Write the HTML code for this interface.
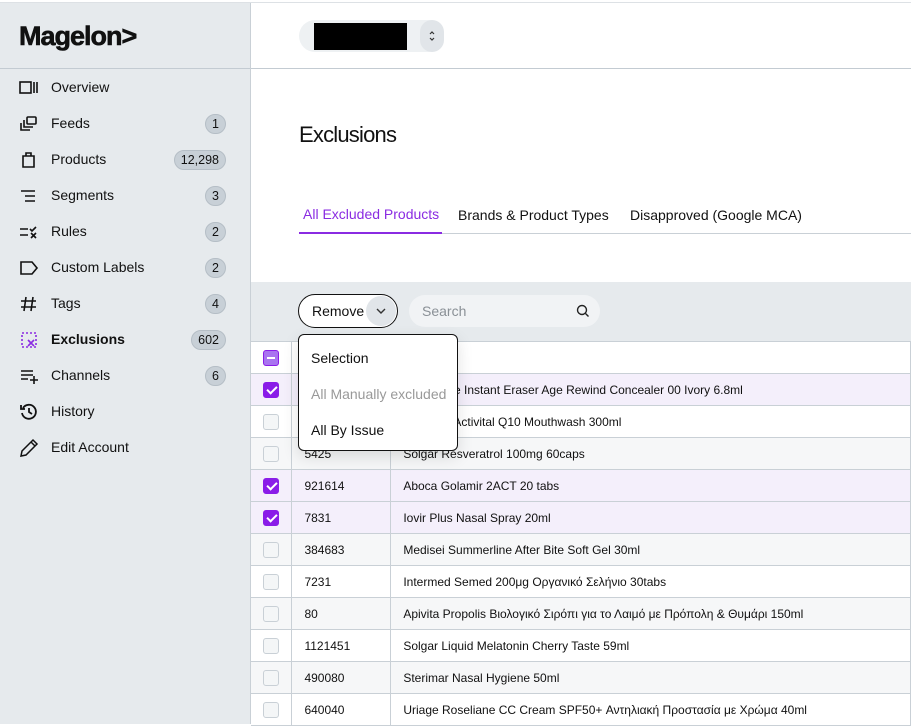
<!DOCTYPE html>
<html><head><meta charset="utf-8"><style>
*{box-sizing:border-box;margin:0;padding:0}
body{width:911px;height:724px;overflow:hidden;font-family:"Liberation Sans",sans-serif;background:#fff;position:relative;color:#111}
.top{position:absolute;left:0;top:0;width:911px;height:3px;background:#fff;border-bottom:1px solid #dde1e5}
.side{position:absolute;left:0;top:3px;width:251px;height:721px;background:#e6eaed;border-right:1px solid #c9d0d6}
.logo{position:absolute;left:19px;top:18px;font-size:27px;font-weight:bold;letter-spacing:-1px;-webkit-text-stroke:0.6px #111}
.sline{position:absolute;left:0;top:65px;width:250px;height:1px;background:#c3cbd2}
.nav{position:absolute;left:0;width:250px;height:36px;font-size:14px}
.nav .ic{position:absolute;left:19px;top:8px;width:20px;height:20px}
.nav .t{position:absolute;left:51px;top:9px}
.badge{position:absolute;right:24px;top:8px;height:20px;min-width:21px;padding:0 6px;border-radius:10px;background:#c8d0d7;border:1px solid #b5bec6;font-size:12.5px;line-height:18px;text-align:center}
.main{position:absolute;left:251px;top:3px;right:0;bottom:0}
.hdr{position:absolute;left:0;top:0;right:0;height:66px;border-bottom:1px solid #c3cbd2}
.sel{position:absolute;left:48px;top:17px;width:145px;height:32px;border-radius:16px;background:#eef1f3}
.sel .blk{position:absolute;left:15px;top:3px;width:93px;height:27px;background:#000}
.sel .arr{position:absolute;right:0;top:0;width:24px;height:32px;border-radius:16px;background:#e1e5e9}
h1{position:absolute;left:48px;top:119px;font-size:22px;font-weight:normal;letter-spacing:-0.8px}
.tabs{position:absolute;left:48px;top:204px;right:0;height:27px;border-bottom:1px solid #c9d0d6;font-size:14px}
.tab{position:absolute;top:0;height:27px}
.tab.a{color:#8a2be2;border-bottom:2px solid #8a2be2;height:28px;left:0;width:143px;padding-left:4px;top:-1px}
.bar{position:absolute;left:0;top:279px;right:0;height:59px;background:#e6eaed}
.rm{position:absolute;left:47px;top:12px;width:100px;height:34px;border:1px solid #111;border-radius:17px;background:#fff;font-size:14px}
.rm span{position:absolute;left:13px;top:8px}
.rm .dd{position:absolute;right:1px;top:1px;width:30px;height:30px;border-radius:15px;background:#e1e5e9}
.srch{position:absolute;left:158px;top:13px;width:191px;height:32px;border-radius:16px;background:#f1f3f5;color:#8a9096;font-size:14px;padding:8px 13px}
table{position:absolute;left:0;top:338px;border-collapse:collapse;font-size:12px}
td{height:32px;border:1px solid #c9d0d6;border-left:none;padding:0 12px;white-space:nowrap}
td.c{width:41px;padding:0 0 0 12px}
td.i{width:99px}
td.n{width:520px}
tr.g td{background:#f6f7f8}
tr.s td{background:#f4effb}
.cb{width:16px;height:16px;border:1px solid #c9d0d6;border-radius:3px;background:#f4f6f7}
.cb.on{background:#8a1ce8;border-color:#8a1ce8;position:relative}
.cb.on:after{content:"";position:absolute;left:4.5px;top:1px;width:4px;height:8px;border:solid #fff;border-width:0 2px 2px 0;transform:rotate(45deg)}
.cb.ind{background:#a974f0;border-color:#8a1ce8;position:relative}
.cb.ind:after{content:"";position:absolute;left:3px;top:6px;width:8px;height:2px;background:#fff}
.menu{position:absolute;left:298px;top:334px;width:160px;height:117px;background:#fff;border:1px solid #111;border-radius:6px;box-shadow:0 6px 16px rgba(0,0,0,.12);font-size:14px}
.menu div{position:absolute;left:12px}
</style></head><body>
<div class="top"></div>
<div class="side">
<div class="logo">Magelon&gt;</div>
<div class="sline"></div>
</div>
<div style="position:absolute;left:0;top:1px">
<div class="nav" style="top:69px"><svg class="ic" viewBox="0 0 20 20" fill="none" stroke="#111" stroke-width="1.6"><rect x="1" y="4" width="11" height="11"/><path d="M15 4v11M18 4v11"/></svg><span class="t">Overview</span></div>
<div class="nav" style="top:105px"><svg class="ic" viewBox="0 0 20 20" fill="none" stroke="#111" stroke-width="1.6"><rect x="8" y="3" width="9" height="7" rx="1"/><path d="M5 6v7h9M2 9v7h9"/></svg><span class="t">Feeds</span><span class="badge">1</span></div>
<div class="nav" style="top:141px"><svg class="ic" viewBox="0 0 20 20" fill="none" stroke="#111" stroke-width="1.6"><path d="M4 6h11v11H4zM7 6V3h5v3"/></svg><span class="t">Products</span><span class="badge">12,298</span></div>
<div class="nav" style="top:177px"><svg class="ic" viewBox="0 0 20 20" fill="none" stroke="#111" stroke-width="1.6"><path d="M2 5h14M6 10h10M6 15h10"/></svg><span class="t">Segments</span><span class="badge">3</span></div>
<div class="nav" style="top:213px"><svg class="ic" viewBox="0 0 20 20" fill="none" stroke="#111" stroke-width="1.6"><path d="M1 7h8M1 13h8M11 7l2 2 4-4M12 11l5 5M17 11l-5 5"/></svg><span class="t">Rules</span><span class="badge">2</span></div>
<div class="nav" style="top:249px"><svg class="ic" viewBox="0 0 20 20" fill="none" stroke="#111" stroke-width="1.6"><path d="M2 4h11l5 6-5 6H2z"/></svg><span class="t">Custom Labels</span><span class="badge">2</span></div>
<div class="nav" style="top:285px"><svg class="ic" viewBox="0 0 20 20" fill="none" stroke="#111" stroke-width="1.6"><path d="M7 3L5 17M14 3l-2 14M2 7h15M2 13h15"/></svg><span class="t">Tags</span><span class="badge">4</span></div>
<div class="nav" style="top:321px"><svg class="ic" viewBox="0 0 20 20" fill="none" stroke="#8a2be2" stroke-width="1.6"><rect x="3" y="3" width="14" height="14" stroke-dasharray="2 2"/><path d="M9 10l6 6M15 10l-6 6"/></svg><span class="t" style="font-weight:bold">Exclusions</span><span class="badge">602</span></div>
<div class="nav" style="top:357px"><svg class="ic" viewBox="0 0 20 20" fill="none" stroke="#111" stroke-width="1.6"><path d="M2 5h12M2 9h12M2 13h7M15 10v8M11 14h8"/></svg><span class="t">Channels</span><span class="badge">6</span></div>
<div class="nav" style="top:393px"><svg class="ic" viewBox="0 0 20 20" fill="none" stroke="#111" stroke-width="1.8"><path d="M4 6a7 7 0 1 1-1 5M2 3v4h4M10 6v4l3 2"/></svg><span class="t">History</span></div>
<div class="nav" style="top:429px"><svg class="ic" viewBox="0 0 20 20" fill="none" stroke="#111" stroke-width="1.5"><path d="M2 18l1-5L14 2l4 4L7 17zM12 4l4 4"/></svg><span class="t">Edit Account</span></div>
</div>
<div class="main">
<div class="hdr"><div class="sel"><div class="blk"></div><div class="arr"><svg width="24" height="32" viewBox="0 0 24 32" fill="none" stroke="#333" stroke-width="1.2"><path d="M10 14l2-2 2 2M10 18l2 2 2-2"/></svg></div></div></div>
<h1>Exclusions</h1>
<div class="tabs"><div class="tab a">All Excluded Products</div><div class="tab" style="left:159px">Brands &amp; Product Types</div><div class="tab" style="left:331px">Disapproved (Google MCA)</div></div>
<div class="bar">
<div class="rm"><span>Remove</span><div class="dd"><svg width="30" height="30" fill="none" stroke="#333" stroke-width="1.4"><path d="M11 13l4 4 4-4"/></svg></div></div>
<div class="srch">Search<svg style="position:absolute;right:10px;top:9px" width="14" height="14" fill="none" stroke="#222" stroke-width="1.4"><circle cx="6" cy="6" r="4.5"/><path d="M9.5 9.5l3 3"/></svg></div>
</div>
<table>
<tr><td class="c"><div class="cb ind"></div></td><td class="i"></td><td class="n"></td></tr>
<tr class="s"><td class="c"><div class="cb on"></div></td><td class="i"></td><td class="n">Maybelline Instant Eraser Age Rewind Concealer 00 Ivory 6.8ml</td></tr>
<tr><td class="c"><div class="cb"></div></td><td class="i"></td><td class="n">Intermed Activital Q10 Mouthwash 300ml</td></tr>
<tr class="g"><td class="c"><div class="cb"></div></td><td class="i">5425</td><td class="n">Solgar Resveratrol 100mg 60caps</td></tr>
<tr class="s"><td class="c"><div class="cb on"></div></td><td class="i">921614</td><td class="n">Aboca Golamir 2ACT 20 tabs</td></tr>
<tr class="s"><td class="c"><div class="cb on"></div></td><td class="i">7831</td><td class="n">Iovir Plus Nasal Spray 20ml</td></tr>
<tr class="g"><td class="c"><div class="cb"></div></td><td class="i">384683</td><td class="n">Medisei Summerline After Bite Soft Gel 30ml</td></tr>
<tr><td class="c"><div class="cb"></div></td><td class="i">7231</td><td class="n">Intermed Semed 200μg Οργανικό Σελήνιο 30tabs</td></tr>
<tr class="g"><td class="c"><div class="cb"></div></td><td class="i">80</td><td class="n">Apivita Propolis Βιολογικό Σιρόπι για το Λαιμό με Πρόπολη &amp; Θυμάρι 150ml</td></tr>
<tr><td class="c"><div class="cb"></div></td><td class="i">1121451</td><td class="n">Solgar Liquid Melatonin Cherry Taste 59ml</td></tr>
<tr class="g"><td class="c"><div class="cb"></div></td><td class="i">490080</td><td class="n">Sterimar Nasal Hygiene 50ml</td></tr>
<tr><td class="c"><div class="cb"></div></td><td class="i">640040</td><td class="n">Uriage Roseliane CC Cream SPF50+ Αντηλιακή Προστασία με Χρώμα 40ml</td></tr>
</table>
</div>
<div class="menu"><div style="top:15px">Selection</div><div style="top:51px;color:#999">All Manually excluded</div><div style="top:87px">All By Issue</div></div>
</body></html>
